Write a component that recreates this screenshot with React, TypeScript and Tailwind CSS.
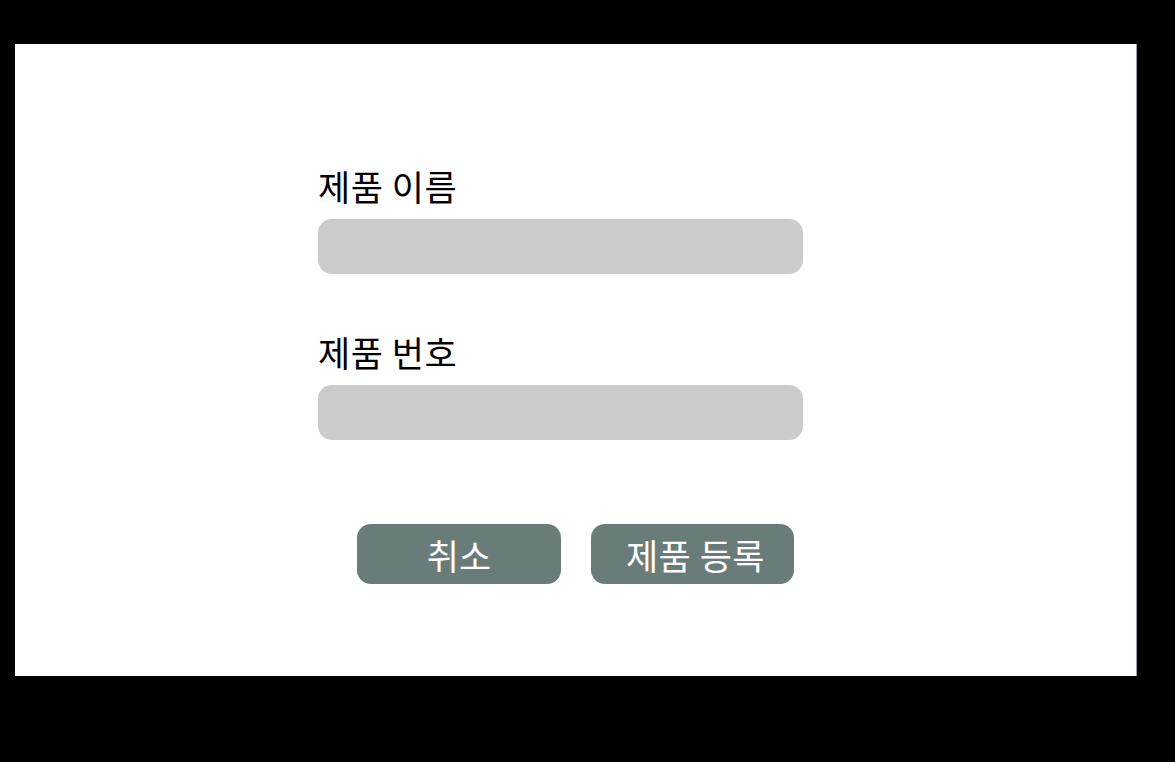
import React from "react";

export default function App() {
  const font = { fontFamily: '"Noto Sans CJK KR", "Noto Sans", sans-serif' };
  return (
    <div className="w-[1175px] h-[762px] bg-black overflow-hidden pt-[44px] pl-[15px]" style={font}>
      <div className="w-[1122px] h-[632px] bg-white pl-[303px] pt-[122px] border-r border-gray-400">
        <div className="w-[485px] flex flex-col">
          <label className="text-[35px] leading-[40px] text-black h-[40px] tracking-[0.5px]">제품 이름</label>
          <div className="mt-[13px] h-[55px] rounded-[14px] bg-[#cccccc]" />
          <label className="mt-[58px] text-[35px] leading-[40px] text-black h-[40px] tracking-[0.5px]">제품 번호</label>
          <div className="mt-[13px] h-[55px] rounded-[14px] bg-[#cccccc]" />
          <div className="mt-[84px] pl-[39px] flex gap-[30px]">
            <button className="w-[204px] h-[60px] rounded-[14px] bg-[#6a7c79] text-white text-[35px] leading-none flex items-center justify-center">
              취소
            </button>
            <button className="w-[203px] h-[60px] rounded-[14px] bg-[#6a7c79] text-white text-[35px] leading-none flex items-center justify-center pl-[6px] tracking-[0.5px]">
              제품 등록
            </button>
          </div>
        </div>
      </div>
    </div>
  );
}
